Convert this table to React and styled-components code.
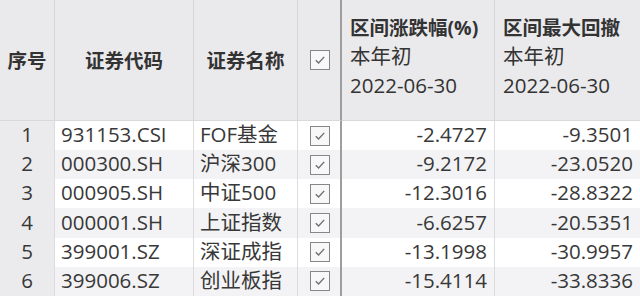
import React from 'react'
import styled, { createGlobalStyle } from 'styled-components'

const GlobalStyle = createGlobalStyle`
  html, body {
    margin: 0;
    padding: 0;
    background: #ffffff;
  }
  body {
    font-family: "Open Sans", "Noto Sans CJK SC", sans-serif;
    color: #333333;
  }
`

const Table = styled.div`
  display: grid;
  grid-template-columns: 55px 139px 104px 44px 153px 1fr;
  grid-template-rows: 121px repeat(6, 1fr);
  width: 640px;
  height: 296px;
  overflow: hidden;
  font-size: 20.5px;
`

const HeadCell = styled.div`
  display: flex;
  align-items: center;
  justify-content: center;
  background: #eaeaec;
  border-right: ${p => (p.$thick ? '2px solid #9d9d9d' : '1px solid #d6d6d8')};
  border-bottom: 1px solid #d9d9db;
  font-weight: 700;
  font-size: 19.5px;
  color: #333333;
  padding-bottom: 1px;
`

const HeadStack = styled.div`
  display: flex;
  flex-direction: column;
  background: #eaeaec;
  border-right: ${p => (p.$last ? 'none' : '1px solid #d6d6d8')};
  border-bottom: 1px solid #d9d9db;
  padding: 13px 8px 0 8px;
  line-height: 29px;
  color: #333333;
  white-space: nowrap;
`

const HeadTitle = styled.span`
  font-weight: 700;
  font-size: 19.5px;
`

const HeadLine = styled.span`
  font-weight: 400;
  font-size: 20.5px;
`

const Cell = styled.div`
  display: flex;
  align-items: center;
  justify-content: ${p => p.$align || 'flex-start'};
  padding: 0 ${p => (p.$align === 'flex-end' ? '7px' : '6px')} 3px;
  background: ${p => (p.$rowHead ? '#ebebed' : p.$stripe ? '#f3f3f5' : '#ffffff')};
  border-right: ${p => (p.$thick ? '2px solid #9d9d9d' : p.$last ? 'none' : '1px solid #dcdcde')};
  color: #383838;
  white-space: nowrap;
  line-height: 26px;
`

const CheckCell = styled(Cell)`
  justify-content: center;
  padding: 0;
`

const Box = styled.span`
  display: inline-flex;
  align-items: center;
  justify-content: center;
  width: 20px;
  height: 20px;
  box-sizing: border-box;
  border: 1.5px solid #878787;
  background: #f8f8f8;
  margin-left: 2px;
`

const CheckBox = () => (
  <Box>
    <svg width="14" height="14" viewBox="0 0 14 14">
      <polyline
        points="2.8,7.2 5.6,10 11.2,3.9"
        fill="none"
        stroke="#707070"
        strokeWidth="1.4"
      />
    </svg>
  </Box>
)

const rows = [
  { code: '931153.CSI', name: 'FOF基金', chg: '-2.4727', dd: '-9.3501' },
  { code: '000300.SH', name: '沪深300', chg: '-9.2172', dd: '-23.0520' },
  { code: '000905.SH', name: '中证500', chg: '-12.3016', dd: '-28.8322' },
  { code: '000001.SH', name: '上证指数', chg: '-6.6257', dd: '-20.5351' },
  { code: '399001.SZ', name: '深证成指', chg: '-13.1998', dd: '-30.9957' },
  { code: '399006.SZ', name: '创业板指', chg: '-15.4114', dd: '-33.8336' },
]

export default function App() {
  return (
    <>
      <GlobalStyle />
      <Table>
        <HeadCell>序号</HeadCell>
        <HeadCell>证券代码</HeadCell>
        <HeadCell>证券名称</HeadCell>
        <HeadCell $thick>
          <CheckBox />
        </HeadCell>
        <HeadStack>
          <HeadTitle>区间涨跌幅(%)</HeadTitle>
          <HeadLine>本年初</HeadLine>
          <HeadLine>2022-06-30</HeadLine>
        </HeadStack>
        <HeadStack $last>
          <HeadTitle>区间最大回撤</HeadTitle>
          <HeadLine>本年初</HeadLine>
          <HeadLine>2022-06-30</HeadLine>
        </HeadStack>

        {rows.map((r, i) => {
          const stripe = i % 2 === 1
          return (
            <React.Fragment key={r.code}>
              <Cell $rowHead $align="center">{i + 1}</Cell>
              <Cell $stripe={stripe}>{r.code}</Cell>
              <Cell $stripe={stripe}>{r.name}</Cell>
              <CheckCell $stripe={stripe} $thick>
                <CheckBox />
              </CheckCell>
              <Cell $stripe={stripe} $align="flex-end">{r.chg}</Cell>
              <Cell $stripe={stripe} $align="flex-end" $last>{r.dd}</Cell>
            </React.Fragment>
          )
        })}
      </Table>
    </>
  )
}
